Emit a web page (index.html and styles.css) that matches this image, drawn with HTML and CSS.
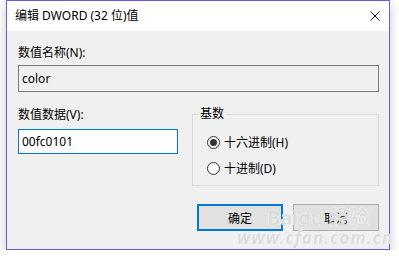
FILE: index.html
```html
<!DOCTYPE html>
<html lang="zh-CN">
<head>
    <meta charset="UTF-8" />
    <title>编辑 DWORD (32 位)值</title>
    <link rel="stylesheet" href="styles.css">
</head>
<body>
<div class="dialog">
    <div class="titlebar">
        <span class="title">编辑 DWORD (32 位)值</span>
        <svg class="close" width="10" height="10" viewBox="0 0 10 10">
            <path d="M0.5 0.5 L9.5 9.5 M9.5 0.5 L0.5 9.5" stroke="#111" stroke-width="1" fill="none" />
        </svg>
    </div>

    <div class="content">
        <div class="label">数值名称(N):</div>
        <div class="field readonly">color</div>

        <div class="row">
            <div class="col">
                <div class="label">数值数据(V):</div>
                <div class="field active">00fc0101</div>
            </div>
            <fieldset class="group">
                <legend>基数</legend>
                <label class="option"><input type="radio" name="base" checked> 十六进制(H)</label>
                <label class="option"><input type="radio" name="base"> 十进制(D)</label>
            </fieldset>
        </div>

        <div class="buttons">
            <button class="btn default">确定</button>
            <button class="btn">取消</button>
        </div>
    </div>

    <div class="watermark">
        <span class="wm-baidu">Baidu 经验</span>
        <span class="wm-site">www.cfan.com.cn</span>
    </div>
</div>
</body>
</html>
```

FILE: styles.css
```css
body {
    margin: 0;
    background: #ffffff;
    font-family: "Noto Sans", "Noto Sans CJK SC", sans-serif;
    font-size: 12px;
    color: #000;
}

.dialog {
    position: relative;
    width: 382px;
    margin-left: 6px;
    border: 1px solid #6c5ae4;
    background: #f0f0f0;
    box-shadow: 0 4px 10px rgba(0, 0, 0, 0.22);
}

.titlebar {
    height: 30px;
    background: #fff;
    display: flex;
    align-items: center;
    justify-content: space-between;
    padding: 0 9px 0 8px;
}

.title {
    line-height: 16px;
}

.content {
    padding: 14px 10px 18px 11px;
}

.label {
    line-height: 16px;
}

.field {
    box-sizing: border-box;
    height: 27px;
    margin-top: 4px;
    padding-left: 3px;
    display: flex;
    align-items: center;
    border: 1px solid #7a7a7a;
}

.readonly {
    background: #f0f0f0;
}

.row {
    display: grid;
    grid-template-columns: 160px 187px;
    column-gap: 14px;
    margin-top: 15px;
}

.active {
    height: 25px;
    margin-top: 6px;
    background: #fff;
    border-color: #0078d7;
}

.group {
    margin: 0;
    padding: 0 0 8px 0;
    min-width: 0;
    border: 1px solid #dcdcdc;
    display: flex;
    flex-direction: column;
    gap: 8px;
}

.group legend {
    margin-left: 5px;
    padding: 0 2px;
    line-height: 14px;
}

.option {
    display: flex;
    align-items: center;
    gap: 4px;
    height: 18px;
    margin-left: 14px;
}

.option:first-of-type {
    margin-top: 12px;
}

.option input {
    appearance: none;
    margin: 0;
    width: 13px;
    height: 13px;
    border: 1px solid #333;
    border-radius: 50%;
    background: #fff;
    display: grid;
    place-items: center;
}

.option input:checked::after {
    content: "";
    width: 7px;
    height: 7px;
    border-radius: 50%;
    background: #333;
}

.buttons {
    display: flex;
    justify-content: flex-end;
    gap: 10px;
    margin-top: 18px;
}

.btn {
    box-sizing: border-box;
    width: 86px;
    height: 27px;
    font: inherit;
    color: #000;
    background: #e1e1e1;
    border: 1px solid #adadad;
    padding: 0;
}

.btn.default {
    border: 2px solid #0078d7;
}

.watermark {
    position: absolute;
    right: -4px;
    bottom: 2px;
    display: flex;
    flex-direction: column;
    align-items: flex-end;
    pointer-events: none;
    color: rgba(190, 190, 190, 0.55);
    text-shadow: 0 0 1px #fff, 0 0 1px #fff;
}

.wm-baidu {
    margin-right: 24px;
    font-size: 20px;
    font-weight: bold;
    line-height: 22px;
}

.wm-site {
    font-size: 17px;
    font-weight: bold;
    font-style: italic;
    line-height: 18px;
    letter-spacing: 1px;
}
```
